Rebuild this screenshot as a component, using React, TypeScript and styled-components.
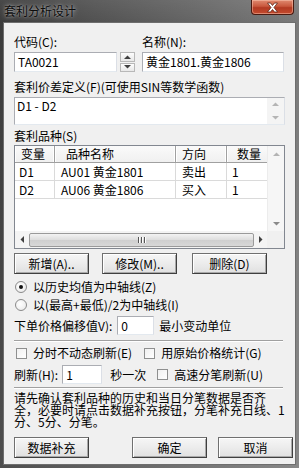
import styled, { createGlobalStyle } from 'styled-components';

const GlobalStyle = createGlobalStyle`
  html, body {
    margin: 0;
    padding: 0;
  }
  body {
    width: 299px;
    height: 468px;
    overflow: hidden;
    font-family: "Noto Sans CJK SC", "Liberation Sans", sans-serif;
    font-size: 12px;
    color: #000;
  }
`;

const Window = styled.div`
  width: 299px;
  height: 468px;
  box-sizing: border-box;
  display: flex;
  flex-direction: column;
  padding: 0 3px 3px 3px;
  background:
    linear-gradient(180deg, rgba(255, 255, 255, 0.08), rgba(0, 0, 0, 0) 22px),
    linear-gradient(100deg, #3a3a3a 0%, #515151 25%, #676767 55%, #7a7a7a 80%, #888 100%);
`;

const TitleBar = styled.div`
  height: 22px;
  display: flex;
  justify-content: space-between;
  align-items: flex-start;
`;

const Title = styled.div`
  margin: 4px 0 0 1px;
  font-size: 12px;
  line-height: 14px;
  color: #0c0c0c;
  text-shadow: 0 0 5px rgba(255, 255, 255, 0.55), 0 0 2px rgba(255, 255, 255, 0.4);
`;

const CloseButton = styled.div`
  width: 43px;
  height: 15px;
  margin-right: 2px;
  box-sizing: border-box;
  border: 1px solid #4a1a10;
  border-top: none;
  border-radius: 0 0 4px 4px;
  background: linear-gradient(180deg, #e08a70 0%, #c9583d 45%, #b23a22 55%, #c44a2e 100%);
  box-shadow: inset 0 0 0 1px rgba(255, 210, 190, 0.45);
  display: flex;
  align-items: center;
  justify-content: center;
`;

const Client = styled.div`
  flex: 1;
  background: #f0f0f0;
  border: 1px solid #6e6e6e;
  padding: 12px 10px 0 10px;
  display: flex;
  flex-direction: column;
`;

const Label = styled.div<{ $top?: number }>`
  line-height: 14px;
  height: 14px;
  white-space: nowrap;
  margin-top: ${(p) => p.$top ?? 0}px;
`;

const TopGrid = styled.div`
  display: grid;
  grid-template-columns: 106px 22px 143px;
  grid-template-rows: 14px 20px;
  row-gap: 3px;
`;

const TextBox = styled.div<{ $w: number; $h?: number }>`
  width: ${(p) => p.$w}px;
  height: ${(p) => p.$h ?? 20}px;
  box-sizing: border-box;
  background: #fff;
  border: 1px solid #abadb3;
  border-right-color: #dbdfe6;
  border-bottom-color: #e3e9ef;
  padding: 0 3px;
  line-height: 18px;
  white-space: nowrap;
  overflow: hidden;
`;

const Spinner = styled.div`
  width: 15px;
  height: 20px;
  display: flex;
  flex-direction: column;
  gap: 1px;
`;

const SpinPart = styled.div`
  flex: 1;
  box-sizing: border-box;
  border: 1px solid #b8b8b8;
  background: linear-gradient(180deg, #fdfdfd, #e8e8e8);
  display: flex;
  align-items: center;
  justify-content: center;
`;

const Memo = styled.div`
  margin-top: 3px;
  height: 28px;
  box-sizing: border-box;
  background: #fff;
  border: 1px solid #abadb3;
  border-right-color: #dbdfe6;
  border-bottom-color: #e3e9ef;
  display: flex;
`;

const MemoText = styled.div`
  flex: 1;
  padding: 1px 2px;
  line-height: 14px;
`;

const VBar = styled.div`
  width: 17px;
  background: #f4f4f4;
  display: flex;
  flex-direction: column;
  justify-content: space-between;
  align-items: center;
  padding: 4px 0;
  box-sizing: border-box;
`;

const ListView = styled.div`
  margin-top: 2px;
  height: 104px;
  box-sizing: border-box;
  border: 1px solid #828790;
  background: #fff;
  display: grid;
  grid-template-columns: 1fr 17px;
  grid-template-rows: 1fr 17px;
`;

const Table = styled.div`
  overflow: hidden;
`;

const TableRow = styled.div<{ $head?: boolean }>`
  display: grid;
  grid-template-columns: 40px 121px 51px 60px;
  height: ${(p) => (p.$head ? 17 : 18)}px;
  box-sizing: border-box;
  background: ${(p) => (p.$head ? 'linear-gradient(180deg, #fafafa, #f0f0f0)' : '#fff')};
  border-bottom: 1px solid ${(p) => (p.$head ? '#a0a0a0' : '#dadada')};
`;

const Cell = styled.div<{ $head?: boolean; $pad?: number }>`
  box-sizing: border-box;
  padding-left: ${(p) => p.$pad ?? 5}px;
  line-height: ${(p) => (p.$head ? 16 : 17)}px;
  white-space: nowrap;
  overflow: hidden;
  border-right: 1px solid ${(p) => (p.$head ? '#a0a0a0' : '#dadada')};
  box-shadow: ${(p) => (p.$head ? 'inset -1px 0 0 #ffffff, inset 1px 0 0 #ffffff' : 'none')};
`;

const ListVBar = styled(VBar)`
  background: #f6f6f6;
  border-left: 1px solid #ececec;
  padding: 6px 0 5px;
`;

const HBar = styled.div`
  background: #f4f4f4;
  display: flex;
  align-items: center;
  padding: 0 4px 0 5px;
  gap: 5px;
`;

const Thumb = styled.div`
  flex: 1;
  height: 14px;
  box-sizing: border-box;
  border: 1px solid #9a9a9a;
  border-radius: 2px;
  background: linear-gradient(180deg, #f3f3f3, #dddddd 50%, #cfcfcf 51%, #d8d8d8);
  display: flex;
  align-items: center;
  justify-content: center;
  gap: 2px;
`;

const Grip = styled.div`
  width: 1px;
  height: 6px;
  background: #555;
  box-shadow: 1px 0 0 #fff;
`;

const Corner = styled.div`
  background: #f0f0f0;
`;

const ButtonRow = styled.div<{ $top: number; $cols: string }>`
  margin-top: ${(p) => p.$top}px;
  display: grid;
  grid-template-columns: ${(p) => p.$cols};
`;

const Button = styled.div`
  width: 75px;
  height: 21px;
  box-sizing: border-box;
  border: 1px solid #707070;
  border-right-color: #3f3f3f;
  border-bottom-color: #3f3f3f;
  background: linear-gradient(180deg, #f6f6f6, #ececec 50%, #e0e0e0);
  box-shadow: inset 1px 1px 0 #ffffff, inset -1px -1px 0 #a9a9a9;
  text-align: center;
  line-height: 19px;
  white-space: nowrap;
`;

const OptionRow = styled.div<{ $top: number; $left?: number }>`
  margin-top: ${(p) => p.$top}px;
  margin-left: ${(p) => p.$left ?? 0}px;
  display: flex;
  align-items: center;
  height: 14px;
  line-height: 14px;
  white-space: nowrap;
`;

const Radio = styled.div<{ $on?: boolean }>`
  width: 12px;
  height: 12px;
  margin: 0 6px 0 1px;
  box-sizing: border-box;
  border-radius: 50%;
  border: 1px solid #8a8a8a;
  background: radial-gradient(circle at 40% 40%, #ffffff, #e6e6e6);
  display: flex;
  align-items: center;
  justify-content: center;

  &::after {
    content: '';
    width: 4px;
    height: 4px;
    border-radius: 50%;
    background: ${(p) => (p.$on ? '#111' : 'transparent')};
  }
`;

const Check = styled.div`
  width: 11px;
  height: 11px;
  margin: 0 6px 0 2px;
  flex: none;
  box-sizing: border-box;
  border: 1px solid #8e8f8f;
  background: linear-gradient(135deg, #f0f0f0, #ffffff);
`;

const FieldRow = styled.div<{ $top: number }>`
  margin-top: ${(p) => p.$top}px;
  height: 19px;
  display: flex;
  align-items: center;
  white-space: nowrap;
`;

const Gap = styled.span<{ $w: number }>`
  display: inline-block;
  width: ${(p) => p.$w}px;
  flex: none;
`;

const Separator = styled.div<{ $top: number }>`
  margin-top: ${(p) => p.$top}px;
  width: 269px;
  height: 1px;
  background: #a0a0a0;
  border-bottom: 1px solid #ffffff;
`;

const Note = styled.div`
  margin-top: 3px;
  width: 273px;
  line-height: 12px;
`;

const Arrow = ({ dir, color }: { dir: 'up' | 'down' | 'left' | 'right'; color: string }) => {
  const pts = {
    up: '0,4 3.5,0.5 7,4',
    down: '0,0 3.5,3.5 7,0',
    left: '4,0 0.5,3.5 4,7',
    right: '0,0 3.5,3.5 0,7',
  }[dir];
  const vertical = dir === 'up' || dir === 'down';
  return (
    <svg width={vertical ? 7 : 4} height={vertical ? 4 : 7} viewBox={vertical ? '0 0 7 4' : '0 0 4 7'}>
      <polygon points={pts} fill={color} />
    </svg>
  );
};

const rows = [
  { v: 'D1', name: 'AU01 黄金1801', dir: '卖出', qty: '1' },
  { v: 'D2', name: 'AU06 黄金1806', dir: '买入', qty: '1' },
];

export default function App() {
  return (
    <>
      <GlobalStyle />
      <Window>
        <TitleBar>
          <Title>套利分析设计</Title>
          <CloseButton>
            <svg width="13" height="11" viewBox="0 0 13 11">
              <path
                d="M1.5 1 L4.5 1 L6.5 3.5 L8.5 1 L11.5 1 L8 5.5 L11.5 10 L8.5 10 L6.5 7.5 L4.5 10 L1.5 10 L5 5.5 Z"
                fill="#fff"
                stroke="#5a2418"
                strokeWidth="0.8"
              />
            </svg>
          </CloseButton>
        </TitleBar>
        <Client>
          <TopGrid>
            <Label>代码(C):</Label>
            <span />
            <Label>名称(N):</Label>
            <TextBox $w={103}>TA0021</TextBox>
            <Spinner>
              <SpinPart>
                <Arrow dir="up" color="#404040" />
              </SpinPart>
              <SpinPart>
                <Arrow dir="down" color="#404040" />
              </SpinPart>
            </Spinner>
            <TextBox $w={142}>黄金1801.黄金1806</TextBox>
          </TopGrid>

          <Label $top={8}>套利价差定义(F)(可使用SIN等数学函数)</Label>
          <Memo>
            <MemoText>D1 - D2</MemoText>
            <VBar>
              <Arrow dir="up" color="#b4b4b4" />
              <Arrow dir="down" color="#b4b4b4" />
            </VBar>
          </Memo>

          <Label $top={4}>套利品种(S)</Label>
          <ListView>
            <Table>
              <TableRow $head>
                <Cell $head $pad={6}>变量</Cell>
                <Cell $head $pad={11}>品种名称</Cell>
                <Cell $head $pad={6}>方向</Cell>
                <Cell $head $pad={10}>数量</Cell>
              </TableRow>
              {rows.map((r) => (
                <TableRow key={r.v}>
                  <Cell $pad={4}>{r.v}</Cell>
                  <Cell $pad={6}>{r.name}</Cell>
                  <Cell $pad={6}>{r.dir}</Cell>
                  <Cell $pad={5}>{r.qty}</Cell>
                </TableRow>
              ))}
            </Table>
            <ListVBar>
              <Arrow dir="up" color="#b4b4b4" />
              <Arrow dir="down" color="#8a8a8a" />
            </ListVBar>
            <HBar>
              <Arrow dir="left" color="#404040" />
              <Thumb>
                <Grip />
                <Grip />
                <Grip />
              </Thumb>
              <Arrow dir="right" color="#404040" />
            </HBar>
            <Corner />
          </ListView>

          <ButtonRow $top={4} $cols="88px 90px 75px">
            <Button>新增(A)..</Button>
            <Button>修改(M)..</Button>
            <Button>删除(D)</Button>
          </ButtonRow>

          <OptionRow $top={6}>
            <Radio $on />
            以历史均值为中轴线(Z)
          </OptionRow>
          <OptionRow $top={4}>
            <Radio />
            以(最高+最低)/2为中轴线(I)
          </OptionRow>

          <FieldRow $top={4}>
            下单价格偏移值V):
            <Gap $w={5} />
            <TextBox $w={37} $h={19}>0</TextBox>
            <Gap $w={5} />
            最小变动单位
          </FieldRow>

          <Separator $top={5} />

          <OptionRow $top={4}>
            <Check />
            分时不动态刷新(E)
            <Gap $w={10} />
            <Check />
            用原始价格统计(G)
          </OptionRow>

          <FieldRow $top={5}>
            刷新(H):
            <Gap $w={4} />
            <TextBox $w={40} $h={19}>1</TextBox>
            <Gap $w={8} />
            秒一次
            <Gap $w={9} />
            <Check />
            高速分笔刷新(U)
          </FieldRow>

          <Separator $top={3} />

          <Note>
            请先确认套利品种的历史和当日分笔数据是否齐全，必要时请点击数据补充按钮，分笔补充日线、1分、5分、分笔。
          </Note>

          <ButtonRow $top={9} $cols="118px 86px 65px">
            <Button>数据补充</Button>
            <Button>确定</Button>
            <Button>取消</Button>
          </ButtonRow>
        </Client>
      </Window>
    </>
  );
}
